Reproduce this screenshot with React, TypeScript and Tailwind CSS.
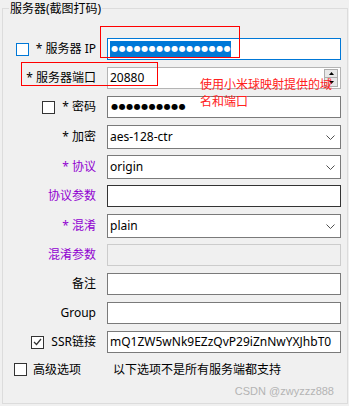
import React from "react";

const Check = ({ blue, checked }: { blue?: boolean; checked?: boolean }) => (
  <span
    className={`w-[13px] h-[13px] shrink-0 bg-white border flex items-center justify-center ${
      blue ? "border-[#0078d7]" : "border-[#333333]"
    }`}
  >
    {checked && (
      <svg width="9" height="8" viewBox="0 0 9 8">
        <polyline points="1,4 3.5,6.5 8,1" fill="none" stroke="#333" strokeWidth="1.2" />
      </svg>
    )}
  </span>
);

const Chevron = () => (
  <svg width="9" height="5" viewBox="0 0 9 5" className="mr-[5px]">
    <polyline points="0.5,0.5 4.5,4.5 8.5,0.5" fill="none" stroke="#505050" strokeWidth="1" />
  </svg>
);

const Dots = ({ n, white }: { n: number; white?: boolean }) => (
  <span className={`flex ${white ? "text-white" : "text-black"}`}>
    {Array.from({ length: n }).map((_, i) => (
      <span key={i} className="w-[7.5px] text-center text-[8px] leading-[10px] font-['DejaVu_Sans',sans-serif]">
        ●
      </span>
    ))}
  </span>
);

function Row({
  label,
  purple,
  check,
  mt,
  children,
}: {
  label: React.ReactNode;
  purple?: boolean;
  check?: React.ReactNode;
  mt: string;
  children: React.ReactNode;
}) {
  return (
    <div className={`flex items-center ${mt}`}>
      <div className="w-[93px] shrink-0 flex justify-end items-center gap-[7px]">
        {check}
        <span className={`whitespace-nowrap ${purple ? "text-[#9000d0]" : "text-black"}`}>{label}</span>
      </div>
      {children}
    </div>
  );
}

export default function App() {
  const box = "ml-[11px] w-[234px] bg-white border flex items-center pl-[2px] box-border";
  return (
    <div className="relative w-[349px] h-[406px] bg-[#f0f0f0] overflow-hidden font-['Noto_Sans','Noto_Sans_CJK_SC',sans-serif] text-[12px] leading-[16px] text-black">
      <div className="ml-[2px] mt-[8px] w-[346px] h-[396px] border border-[#dcdcdc] box-border pt-[29px] relative">
        <span className="absolute left-[6px] top-[-7px] px-[1px] bg-[#f0f0f0] leading-[14px]">服务器(截图打码)</span>

        <Row label="* 服务器 IP" check={<Check blue />} mt="mt-0">
          <div className={`${box} h-[22px] border-[#0078d7]`}>
            <span className="bg-[#0078d7] h-[16px] flex items-center pl-[1px]">
              <Dots n={16} white />
            </span>
          </div>
        </Row>

        <Row label="* 服务器端口" mt="mt-[7px]">
          <div className={`${box} h-[22px] border-[#b4b4b4] justify-between`}>
            <span>20880</span>
            <span className="flex flex-col mr-[2px]">
              <span className="w-[14px] h-[9px] bg-[#e8e8e8] border border-[#adadad] flex items-center justify-center">
                <svg width="5" height="3" viewBox="0 0 5 3"><polygon points="2.5,0 5,3 0,3" fill="#000" /></svg>
              </span>
              <span className="w-[14px] h-[9px] bg-[#e8e8e8] border border-t-0 border-[#adadad] flex items-center justify-center">
                <svg width="5" height="3" viewBox="0 0 5 3"><polygon points="0,0 5,0 2.5,3" fill="#000" /></svg>
              </span>
            </span>
          </div>
        </Row>

        <Row label="* 密码" check={<Check />} mt="mt-[7px]">
          <div className={`${box} h-[22px] border-[#7a7a7a]`}>
            <span className="pl-[1px]">
              <Dots n={10} />
            </span>
          </div>
        </Row>

        <Row label="* 加密" mt="mt-[7px]">
          <div className={`${box} h-[24px] border-[#7a7a7a] justify-between`}>
            <span>aes-128-ctr</span>
            <Chevron />
          </div>
        </Row>

        <Row label="* 协议" purple mt="mt-[6px]">
          <div className={`${box} h-[24px] border-[#7a7a7a] justify-between`}>
            <span>origin</span>
            <Chevron />
          </div>
        </Row>

        <Row label="协议参数" purple mt="mt-[6px]">
          <div className={`${box} h-[22px] border-[#333333]`} />
        </Row>

        <Row label="* 混淆" purple mt="mt-[7px]">
          <div className={`${box} h-[24px] border-[#7a7a7a] justify-between`}>
            <span>plain</span>
            <Chevron />
          </div>
        </Row>

        <Row label="混淆参数" purple mt="mt-[6px]">
          <div className={`${box} h-[22px] border-[#cccccc] !bg-[#f0f0f0]`} />
        </Row>

        <Row label="备注" mt="mt-[7px]">
          <div className={`${box} h-[22px] border-[#7a7a7a]`} />
        </Row>

        <Row label="Group" mt="mt-[7px]">
          <div className={`${box} h-[22px] border-[#7a7a7a]`} />
        </Row>

        <Row label="SSR链接" check={<Check checked />} mt="mt-[7px]">
          <div className={`${box} h-[22px] border-[#7a7a7a] overflow-hidden`}>
            <span className="whitespace-nowrap">mQ1ZW5wNk9EZzQvP29iZnNwYXJhbT0</span>
          </div>
        </Row>

        <div className="flex items-center mt-[10px] pl-[11px] h-[13px]">
          <Check />
          <span className="ml-[6px] whitespace-nowrap">高级选项</span>
          <span className="ml-[32px] whitespace-nowrap">以下选项不是所有服务端都支持</span>
        </div>

        <div className="flex justify-end pr-[13px] mt-[9px]">
          <span className="text-[11px] leading-[12px] text-[#b4b4b4] font-['Liberation_Sans',sans-serif]">CSDN @zwyzzz888</span>
        </div>
      </div>

      {/* annotations */}
      <div className="absolute left-[100px] top-[26px] w-[140px] h-[32px] border border-[#ff0000]" />
      <div className="absolute left-[21px] top-[62px] w-[137px] h-[24px] border border-[#ff0000]" />
      <div className="absolute left-[200px] top-[76px] w-[140px] text-[#ff2020] leading-[17px]">
        使用小米球映射提供的域名和端口
      </div>
    </div>
  );
}
